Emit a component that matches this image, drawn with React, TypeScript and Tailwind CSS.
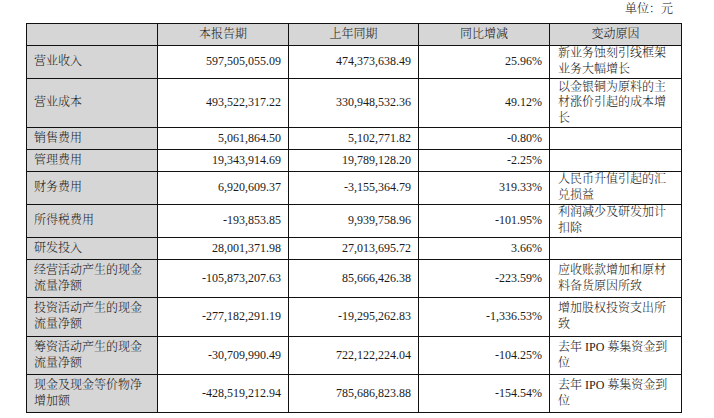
import React from "react";

type Row = {
  name: string;
  cur: string;
  prev: string;
  change: string;
  reason: string;
  h: string;
};

const rows: Row[] = [
  { name: "营业收入", cur: "597,505,055.09", prev: "474,373,638.49", change: "25.96%", reason: "新业务蚀刻引线框架业务大幅增长", h: "h-[33px]" },
  { name: "营业成本", cur: "493,522,317.22", prev: "330,948,532.36", change: "49.12%", reason: "以金银铜为原料的主材涨价引起的成本增长", h: "h-[49px]" },
  { name: "销售费用", cur: "5,061,864.50", prev: "5,102,771.82", change: "-0.80%", reason: "", h: "h-[22px]" },
  { name: "管理费用", cur: "19,343,914.69", prev: "19,789,128.20", change: "-2.25%", reason: "", h: "h-[22px]" },
  { name: "财务费用", cur: "6,920,609.37", prev: "-3,155,364.79", change: "319.33%", reason: "人民币升值引起的汇兑损益", h: "h-[33px]" },
  { name: "所得税费用", cur: "-193,853.85", prev: "9,939,758.96", change: "-101.95%", reason: "利润减少及研发加计扣除", h: "h-[33px]" },
  { name: "研发投入", cur: "28,001,371.98", prev: "27,013,695.72", change: "3.66%", reason: "", h: "h-[22px]" },
  { name: "经营活动产生的现金流量净额", cur: "-105,873,207.63", prev: "85,666,426.38", change: "-223.59%", reason: "应收账款增加和原材料备货原因所致", h: "h-[38px]" },
  { name: "投资活动产生的现金流量净额", cur: "-277,182,291.19", prev: "-19,295,262.83", change: "-1,336.53%", reason: "增加股权投资支出所致", h: "h-[39px]" },
  { name: "筹资活动产生的现金流量净额", cur: "-30,709,990.49", prev: "722,122,224.04", change: "-104.25%", reason: "去年 IPO 募集资金到位", h: "h-[38px]" },
  { name: "现金及现金等价物净增加额", cur: "-428,519,212.94", prev: "785,686,823.88", change: "-154.54%", reason: "去年 IPO 募集资金到位", h: "h-[38px]" },
];

const cell = "border border-[#111] px-0 py-0 align-middle leading-[15.6px]";

export default function App() {
  return (
    <div
      className="w-[714px] h-[418px] bg-white text-[12px] text-[#1a1a1a] font-light overflow-hidden"
      style={{ fontFamily: '"Liberation Serif", "Noto Serif CJK SC", "Noto Sans CJK SC", serif' }}
    >
      <div className="h-[23px] flex items-center justify-end pr-[41px] pb-[6px]">单位：元</div>
      <table className="ml-[26px] table-fixed border-collapse w-[655px]">
        <colgroup>
          <col className="w-[131px]" />
          <col className="w-[131px]" />
          <col className="w-[130px]" />
          <col className="w-[131px]" />
          <col className="w-[132px]" />
        </colgroup>
        <thead>
          <tr className="h-[22px] bg-[#d6d6d6]">
            <th className={`${cell} font-light`}></th>
            <th className={`${cell} font-light text-center`}>本报告期</th>
            <th className={`${cell} font-light text-center`}>上年同期</th>
            <th className={`${cell} font-light text-center`}>同比增减</th>
            <th className={`${cell} font-light text-center`}>变动原因</th>
          </tr>
        </thead>
        <tbody>
          {rows.map((r) => (
            <tr key={r.name} className={r.h}>
              <td className={`${cell} bg-[#d6d6d6] pl-[7px] pr-[10px] text-left`}>{r.name}</td>
              <td className={`${cell} pr-[7px] text-right`}>{r.cur}</td>
              <td className={`${cell} pr-[7px] text-right`}>{r.prev}</td>
              <td className={`${cell} pr-[7px] text-right`}>{r.change}</td>
              <td className={`${cell} pl-[8px] pr-[10px] text-left`}>{r.reason}</td>
            </tr>
          ))}
        </tbody>
      </table>
    </div>
  );
}
